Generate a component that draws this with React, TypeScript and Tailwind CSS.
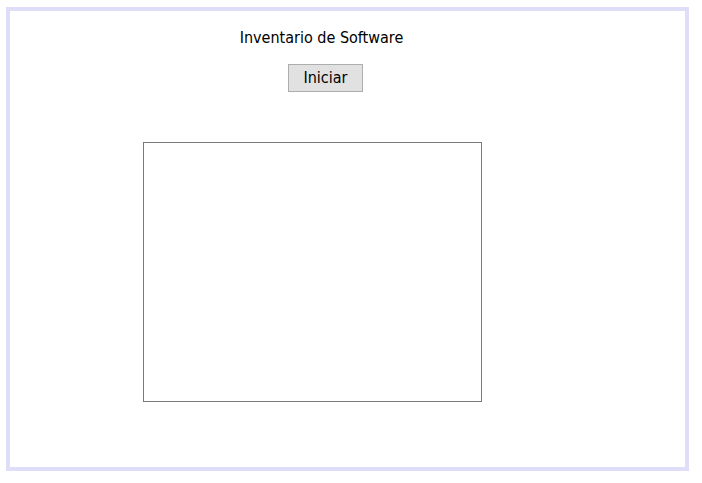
export default function App() {
  return (
    <div className="w-[702px] h-[483px] bg-white pt-[7px] pl-[6px]" style={{ fontFamily: 'Tahoma, "DejaVu Sans Condensed", "DejaVu Sans", sans-serif' }}>
      <div className="w-[683px] h-[464px] border-4 border-[#dedef8] bg-white">
        <div className="flex flex-col">
          <div className="w-[623px] flex flex-col items-center pt-[17px]">
            <div className="text-[16px] leading-[20px] text-black">Inventario de Software</div>
            <button className="mt-[16px] ml-[8px] w-[75px] h-[28px] bg-[#e1e1e1] border border-[#adadad] text-[16px] leading-[20px] text-black">Iniciar</button>
          </div>
          <div className="ml-[133px] mt-[50px] w-[339px] h-[260px] border border-[#7a7a7a] bg-white" />
        </div>
      </div>
    </div>
  );
}
